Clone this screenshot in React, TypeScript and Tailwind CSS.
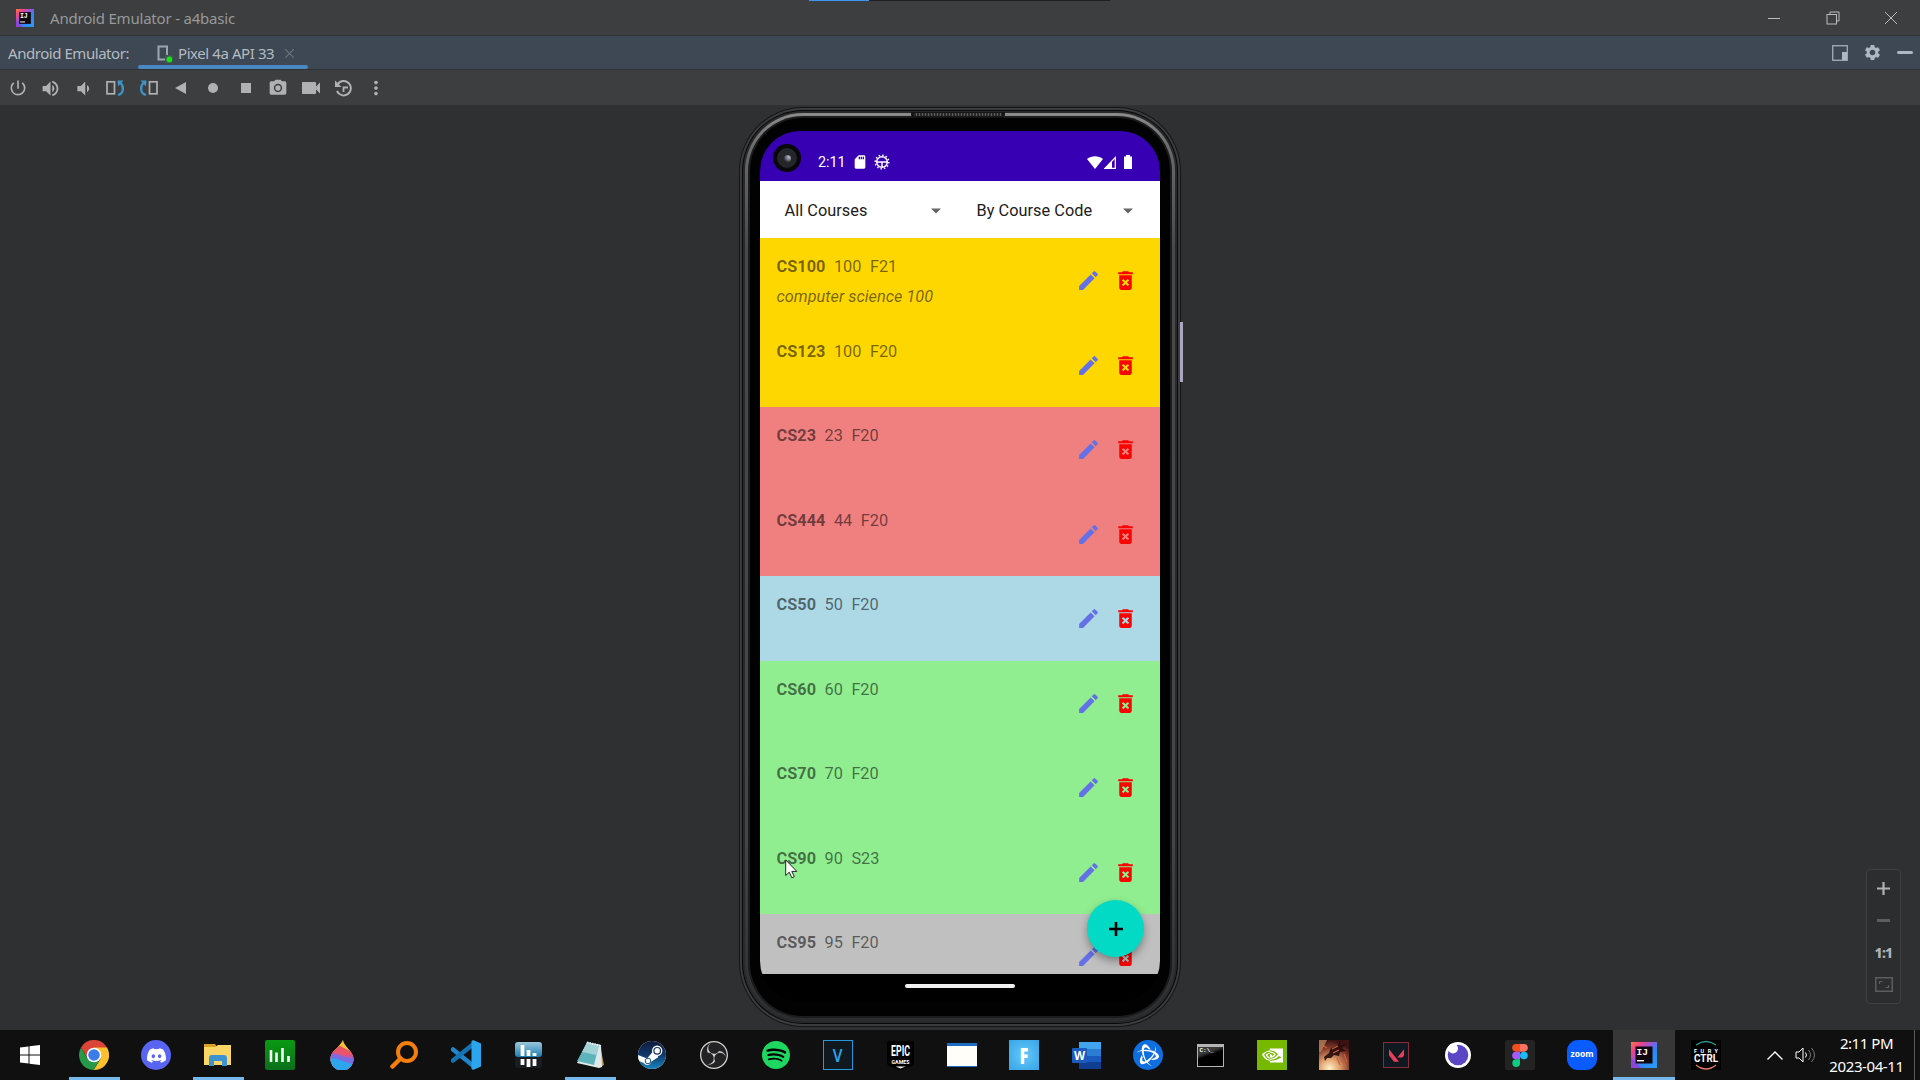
import type { ReactNode } from "react";
import {
  MdPowerSettingsNew, MdVolumeUp, MdVolumeDown, MdCameraAlt, MdVideocam, MdMoreVert,
  MdEdit, MdDeleteForever, MdSdCard, MdSettings,
} from "react-icons/md";
import { SiDiscord, SiSpotify, SiObsstudio, SiSteam, SiNvidia, SiValorant, SiBattledotnet } from "react-icons/si";

function IdeaLogo({ size, id }: { size: number; id: string }) {
  return (
    <svg width={size} height={size} viewBox="0 0 26 26">
      <defs>
        <linearGradient id={id} x1="0" y1="0" x2="1" y2="1">
          <stop offset="0" stopColor="#f97a3c" />
          <stop offset="0.22" stopColor="#f0408c" />
          <stop offset="0.45" stopColor="#8a5be0" />
          <stop offset="0.6" stopColor="#2f86f5" />
          <stop offset="1" stopColor="#2a9df5" />
        </linearGradient>
      </defs>
      <rect width="26" height="26" fill={`url(#${id})`} />
      <path d="M0 16v10h10z" fill="#8b46d8" />
      <rect x="4.5" y="4.5" width="17" height="17" fill="#12060f" />
      <text x="5.6" y="13.4" fill="#fff" fontSize="9.5" fontWeight="700" fontFamily="Liberation Mono, monospace">IJ</text>
      <rect x="6" y="18" width="7" height="1.4" fill="#fff" />
    </svg>
  );
}

function TitleBar() {
  return (
    <header className="relative flex h-[36px] items-center border-b border-[#313437] bg-[#3c3e40] pl-4">
      <IdeaLogo size={18} id="ideaTitle" />
      <span className="ml-4 pt-[2px] text-[15px] tracking-[-0.2px] whitespace-nowrap text-[#97999b]">Android Emulator - a4basic</span>
      <div className="ml-auto flex pt-px text-[#b9bbbc]">
        <div className="flex w-[60px] justify-center">
          <svg width="14" height="14" viewBox="0 0 14 14"><path d="M1 7.5h12" stroke="currentColor" /></svg>
        </div>
        <div className="flex w-[57px] justify-center">
          <svg width="14" height="14" viewBox="0 0 14 14" fill="none" stroke="currentColor">
            <rect x="1" y="3.5" width="9.5" height="9.5" /><path d="M4 3.5V1h9v9h-2.5" />
          </svg>
        </div>
        <div className="flex w-[59px] justify-center">
          <svg width="14" height="14" viewBox="0 0 14 14"><path d="M1 1l12 12M13 1L1 13" stroke="currentColor" /></svg>
        </div>
      </div>
      <div className="absolute top-0 left-[809px] flex h-px w-[301px] bg-[#1f2021]">
        <div className="h-px w-[60px] bg-[#3d97f2]" />
      </div>
    </header>
  );
}

function TabBar() {
  return (
    <div className="flex h-[34px] border-b border-[#2f3337] bg-[#3d4854] text-[15px] text-[#b4bac0]">
      <div className="flex w-[138px] items-center pt-[2px] pl-2 tracking-[-0.45px] whitespace-nowrap">Android Emulator:</div>
      <div className="relative flex w-[170px] items-center pt-[2px] pl-[19px]">
        <svg width="16" height="18" viewBox="0 0 16 18" fill="none">
          <path d="M10 10V1.5H1.5v13H8" stroke="#9aa5af" strokeWidth="2" />
          <rect x="8" y="10" width="8" height="8" fill="#41584e" />
          <circle cx="12.4" cy="14.4" r="2.8" fill="#14e814" />
        </svg>
        <span className="ml-[5px] w-[97px] tracking-[-0.42px] whitespace-nowrap">Pixel 4a API 33</span>
        <svg className="ml-[10px]" width="9" height="9" viewBox="0 0 9 9"><path d="M0 0l9 9M9 0L0 9" stroke="#6c757d" strokeWidth="1.1" /></svg>
        <div className="absolute bottom-0 left-0 h-[4px] w-full rounded-full bg-[#4a88c2]" />
      </div>
      <div className="ml-auto flex items-center text-[#afb7c2]">
        <svg width="16" height="16" viewBox="0 0 16 16">
          <rect x="0.75" y="0.75" width="14.5" height="14.5" fill="none" stroke="currentColor" strokeWidth="1.2" />
          <rect x="10" y="7" width="5" height="8" fill="currentColor" />
        </svg>
        <MdSettings className="ml-[15px]" size={19} />
        <div className="mr-[7px] ml-[15px] h-[3px] w-4 rounded-sm bg-current" />
      </div>
    </div>
  );
}

function RotateIcon({ flip }: { flip?: boolean }) {
  return (
    <svg className={flip ? "-scale-x-100" : ""} width="19" height="18" viewBox="0 0 19 18" fill="none">
      <rect x="1" y="2.8" width="7.5" height="12" stroke="#afb1b3" strokeWidth="1.7" />
      <path d="M12 16c6-1.500 6-9 2.500-12" stroke="#3d94c6" strokeWidth="2.300" />
      <path d="M11.500 1.500h6l-5.500 6z" fill="#3d94c6" />
    </svg>
  );
}

function ToolBar() {
  const tools: ReactNode[] = [
    <MdPowerSettingsNew size={20} />,
    <MdVolumeUp size={21} />,
    <MdVolumeDown size={21} />,
    <RotateIcon />,
    <RotateIcon flip />,
    <svg width="11" height="12" viewBox="0 0 11 12"><path d="M11 0v12L0 6z" fill="currentColor" /></svg>,
    <svg width="10" height="10" viewBox="0 0 10 10"><circle cx="5" cy="5" r="5" fill="currentColor" /></svg>,
    <div className="size-[10px] bg-current" />,
    <MdCameraAlt size={20} />,
    <MdVideocam size={24} />,
    <svg width="19" height="18" viewBox="0 0 19 18" fill="none" stroke="currentColor">
      <path d="M3.500 5.500A7.200 7.200 0 1 1 3 12" strokeWidth="2" />
      <path d="M1 1.500v6.500h6.500z" fill="currentColor" stroke="none" />
      <path d="M14 8.500H9.500V13" strokeWidth="1.800" />
    </svg>,
    <MdMoreVert size={22} />,
  ];
  return (
    <div className="flex h-[36px] items-center border-b border-[#323232] bg-[#3c3e40] pt-px pl-[2px] text-[#afb1b3]">
      {tools.map((t, i) => (
        <div key={i} className="flex w-[32.5px] justify-center">{t}</div>
      ))}
    </div>
  );
}

type Course = { code: string; mark: string; term: string; note?: string; bg: string };

const courses: Course[] = [
  { code: "CS100", mark: "100", term: "F21", note: "computer science 100", bg: "bg-[#ffd700]" },
  { code: "CS123", mark: "100", term: "F20", bg: "bg-[#ffd700]" },
  { code: "CS23", mark: "23", term: "F20", bg: "bg-[#f08080]" },
  { code: "CS444", mark: "44", term: "F20", bg: "bg-[#f08080]" },
  { code: "CS50", mark: "50", term: "F20", bg: "bg-[#add8e6]" },
  { code: "CS60", mark: "60", term: "F20", bg: "bg-[#90ee90]" },
  { code: "CS70", mark: "70", term: "F20", bg: "bg-[#90ee90]" },
  { code: "CS90", mark: "90", term: "S23", bg: "bg-[#90ee90]" },
  { code: "CS95", mark: "95", term: "F20", bg: "bg-[#c0c0c0]" },
];

function CourseRow({ c }: { c: Course }) {
  return (
    <div className={`flex h-[84.5px] shrink-0 pl-[16.500px] text-[16.300px] text-black/55 ${c.bg}`}>
      <div className="flex-1 pt-[19px]">
        <div className="flex gap-[8.500px] leading-[20px]">
          <span className="font-bold tracking-[0.050px]">{c.code}</span>
          <span>{c.mark}</span>
          <span>{c.term}</span>
        </div>
        {c.note && <div className="mt-[10px] leading-[20px] tracking-[0.020px] italic">{c.note}</div>}
      </div>
      <div className="flex gap-[12px] pt-[30px] pr-[22px]">
        <MdEdit size={25} className="text-[#6370e6]" />
        <MdDeleteForever size={25} className="text-[#f70500]" />
      </div>
    </div>
  );
}

function Spinner({ label, pad }: { label: string; pad: string }) {
  return (
    <div className={`flex items-center pt-[2px] text-[16.3px] text-[#202020] ${pad}`}>
      <span className="pt-[2px] tracking-[0.05px] whitespace-nowrap">{label}</span>
      <svg className="ml-auto" width="10" height="6" viewBox="0 0 10 6"><path d="M0 .500h10L5 5.500z" fill="#666" /></svg>
    </div>
  );
}

function Screen() {
  return (
    <div className="relative h-[870px] w-[400px] shrink-0 overflow-hidden rounded-[40px] bg-black font-[Roboto,sans-serif]">
      <div className="flex h-[50px] items-center bg-[#3700b3] pt-[12px] pr-[25px] pl-[13px] text-white">
        <div className="-mt-[8px] flex size-[28px] items-center justify-center rounded-full bg-[#08080b]">
          <div className="flex size-[20px] items-center justify-center rounded-full bg-[#25262a]">
            <div className="size-[7px] rounded-full bg-[radial-gradient(circle_at_70%_30%,#b8bcc8_0,#6c707c_45%,#25262a_80%)]" />
          </div>
        </div>
        <span className="ml-[17px] w-[27px] pt-px text-[14.3px] whitespace-nowrap">2:11</span>
        <MdSdCard className="ml-[7px]" size={16} />
        <svg className="ml-[6px]" width="16" height="16" viewBox="0 0 16 16" fill="none" stroke="#fff">
          <circle cx="8" cy="8" r="5.300" strokeWidth="1.500" />
          <circle cx="8" cy="8" r="6.800" strokeWidth="1.500" strokeDasharray="1.500 2.060" />
          <path d="M3 8h10M8 8V13" strokeWidth="1.500" />
        </svg>
        <svg className="ml-auto" width="16" height="13" viewBox="0 0 16 13"><path d="M0 3C4.500-.800 11.500-.800 16 3L8 13z" fill="#fff" /></svg>
        <svg className="ml-[1px]" width="12" height="13" viewBox="0 0 12 13">
          <path d="M11.300 1.500v10.900H1z" fill="none" stroke="#fff" strokeWidth="1.200" /><path d="M8 4.500V13H0z" fill="#fff" />
        </svg>
        <svg className="mr-[3px] ml-[8px]" width="8" height="14" viewBox="0 0 8 14"><path d="M0 1.500h2V0h4v1.500h2V14H0z" fill="#fff" /></svg>
      </div>
      <div className="grid h-[57px] grid-cols-[192.500px_207.500px] bg-white">
        <Spinner label="All Courses" pad="pl-[24.500px] pr-[12px]" />
        <Spinner label="By Course Code" pad="pl-[24px] pr-[27.500px]" />
      </div>
      <div className="flex h-[736px] flex-col overflow-hidden">
        {courses.map((c) => <CourseRow key={c.code} c={c} />)}
      </div>
      <div className="mx-auto mt-[10px] h-[4px] w-[110px] rounded-full bg-[#f0f0f0]" />
      <div className="absolute top-[769px] left-[327px] flex size-[57px] items-center justify-center rounded-full bg-[#03dac5] shadow-[0_4px_8px_rgba(0,0,0,0.35)]">
        <svg width="14" height="14" viewBox="0 0 14 14"><path d="M7 0v14M0 7h14" stroke="#000" strokeWidth="2.600" /></svg>
      </div>
    </div>
  );
}

function Phone() {
  return (
    <div className="relative h-[920px] w-[442px] rounded-[64px] bg-[#161617] p-[1px]">
      <div className="h-full rounded-[63px] bg-[#3b3c3d] p-[2px]">
        <div className="h-full rounded-[61px] bg-[#08080a] p-[1px]">
          <div className="h-full rounded-[60px] bg-[#29292a] p-[2px]">
            <div className="h-full rounded-[58px] bg-[linear-gradient(#8b8b8b,#6a6a6b_4%,#48494a_15%,#434445_80%,#2c2d2e)] p-[3px]">
              <div className="h-full rounded-[55px] bg-[#1b1c1c] p-[2px]">
                <div className="flex h-full justify-center rounded-[53px] bg-[#020203] pt-[13px]">
                  <Screen />
                </div>
              </div>
            </div>
          </div>
        </div>
      </div>
      <div className="absolute top-[5px] left-[172px] h-[6px] w-[94px] rounded-b-[4px] bg-[#151515] px-[3px] pt-px">
        <div className="h-[3px] bg-[repeating-linear-gradient(90deg,#2a2a2a_0_2px,#5c5c5c_2px_3px)]" />
      </div>
      <div className="absolute top-[215px] -right-[2px] h-[60px] w-[3px] bg-[#aaa5c0]" />
      <svg className="absolute top-[752px] left-[46px]" width="13" height="20" viewBox="0 0 13 20">
        <path d="M.700.900v15.600l3.600-3.300 2.600 5.600 2.400-1.100-2.500-5.300h5z" fill="#fff" stroke="#222" strokeWidth="1" />
      </svg>
    </div>
  );
}

function ZoomPanel() {
  return (
    <div className="flex h-[135px] w-[35px] flex-col items-center rounded-[4px] border border-[#3f4042] bg-[#2c2d2e] pt-[12px]">
      <svg width="13" height="13" viewBox="0 0 13 13"><path d="M6.500 0v13M0 6.500h13" stroke="#afb1b3" strokeWidth="2.200" /></svg>
      <div className="mt-[24px] h-[2.500px] w-[13px] bg-[#5c5d5e]" />
      <span className="mt-[20px] text-[14px] leading-[22px] font-extrabold tracking-[-0.8px] text-[#afb1b3]">1:1</span>
      <svg className="mt-[13px]" width="18" height="15" viewBox="0 0 18 15" fill="none" stroke="#5c5d5e">
        <rect x="0.75" y="0.75" width="16.5" height="13.5" strokeWidth="1.500" /><path d="M4.500 7V4.500H7.500M13.500 8v2.500h-3" strokeWidth="1.200" />
      </svg>
    </div>
  );
}

const chrome = (
  <svg width="30" height="30" viewBox="0 0 30 30">
    <path d="M15 15L2 7.500A15 15 0 0 1 28 7.500z" fill="#db4437" />
    <path d="M15 7.500H28A15 15 0 0 1 14.700 30L21.500 18.700z" fill="#fbc02d" />
    <path d="M2 7.500l6.500 11L15 7.500z" fill="#db4437" />
    <path d="M2 7.500A15 15 0 0 0 14.700 30L21.400 18.700H8.500z" fill="#279847" />
    <circle cx="15" cy="15" r="7.300" fill="#fff" /><circle cx="15" cy="15" r="5.800" fill="#3b7de8" />
  </svg>
);

const discord = (
  <div className="flex size-[30px] items-center justify-center rounded-full bg-[#5865f2] text-white"><SiDiscord size={19} /></div>
);

const folder = (
  <svg width="28" height="24" viewBox="0 0 28 24">
    <path d="M0 1h11l2 3h-13z" fill="#d9a022" /><path d="M0 4h11l3-2h13v20H0z" fill="#fbd566" />
    <path d="M5 23V15q0-3 3-3h12q3 0 3 3v8h-5v-5h-8v5z" fill="#3c93cf" />
  </svg>
);

const bars = (
  <svg width="30" height="30" viewBox="0 0 30 30">
    <defs><linearGradient id="gBars" x2="0" y2="1"><stop stopColor="#0a9a12" /><stop offset="1" stopColor="#0b6f1c" /></linearGradient></defs>
    <rect width="30" height="30" rx="2" fill="url(#gBars)" />
    <path d="M6 10v12M11.500 12.500V22M17.500 8v14M23.500 16v6" stroke="#f4fff4" strokeWidth="2.600" />
  </svg>
);

const paint = (
  <svg width="24" height="30" viewBox="0 0 24 30">
    <defs><clipPath id="drop"><path d="M13 0c1 7 10.500 11 10.500 19A11.500 11.500 0 0 1 .500 19C.500 11 9 8 13 0z" /></clipPath></defs>
    <g clipPath="url(#drop)">
      <rect width="24" height="30" fill="#f5c236" />
      <path d="M0 10l10-4 14 7v17H0z" fill="#ea5566" />
      <path d="M0 12c8-2 12 6 24 2v16H0z" fill="#d0559c" />
      <path d="M0 15c8-3 14 5 24 2v13H0z" fill="#7a6ce0" />
      <path d="M0 18c8 0 12 4 24 6v6H0z" fill="#2ba5ee" />
    </g>
  </svg>
);

const search = (
  <svg width="28" height="28" viewBox="0 0 28 28" fill="none" stroke="#f57f0c" strokeLinecap="round">
    <circle cx="17" cy="11" r="9" strokeWidth="4" /><path d="M10.500 17.500L2.500 25.500" strokeWidth="4.500" />
  </svg>
);

const vscode = (
  <svg width="30" height="30" viewBox="0 0 30 30">
    <path d="M2 9.500L22.500 26" stroke="#1f86cc" strokeWidth="4.500" strokeLinecap="round" />
    <path d="M2 20.500L22.500 4" stroke="#1473b4" strokeWidth="4.500" strokeLinecap="round" />
    <path d="M22 0l8 3.500v23L22 30l-1.500-1.500V1.500z" fill="#2aa5ee" />
  </svg>
);

const monitor = (
  <svg width="27" height="26" viewBox="0 0 27 26">
    <defs><linearGradient id="gMon" x2="0" y2="1"><stop stopColor="#9bc8dc" /><stop offset="1" stopColor="#1b7db2" /></linearGradient></defs>
    <rect width="27" height="15" rx="3" fill="url(#gMon)" /><rect y="15" width="27" height="11" rx="3" fill="#1a1d1f" />
    <path d="M7.500 3v11M13.500 8v6M19.500 11v3M7.500 17v6M13.500 17v8M19.500 17v7" stroke="#fff" strokeWidth="3.800" />
  </svg>
);

const notepad = (
  <svg width="28" height="28" viewBox="0 0 28 28">
    <path d="M24 4l4 20-5 3z" fill="#b79a5c" /><path d="M11 1l14 3 1 22-3 1-22-5z" fill="#dfe9ea" />
    <path d="M11 2l12 2-5 20L1 20z" fill="#5fb3bd" /><path d="M11 2l12 2-2.500 10L6 11z" fill="#a2d2d6" />
    <path d="M11 1.500l13 3" stroke="#e8eeee" strokeWidth="2" strokeDasharray="1.500 1" />
  </svg>
);

const steam = (
  <div className="flex size-[28px] items-center justify-center overflow-hidden rounded-full bg-white text-[#143a6a]">
    <SiSteam className="hidden" />
    <svg width="28" height="28" viewBox="0 0 28 28">
      <defs><linearGradient id="gSteam" x2="0" y2="1"><stop stopColor="#101a3a" /><stop offset="0.5" stopColor="#11386b" /><stop offset="1" stopColor="#1787bf" /></linearGradient></defs>
      <rect width="28" height="28" fill="url(#gSteam)" />
      <path d="M0 14l9 3.600 6-7 5.500 5.500-7 4.500a4.300 4.300 0 0 1-7.800 1.400L0 19.500z" fill="#fff" />
      <circle cx="19.200" cy="9.800" r="5.200" fill="#fff" /><circle cx="19.200" cy="9.800" r="3.300" fill="none" stroke="#14305c" strokeWidth="1.200" />
      <circle cx="10" cy="20" r="2.800" fill="none" stroke="#14507f" strokeWidth="1" />
    </svg>
  </div>
);

const obs = (
  <div className="flex size-[28px] items-center justify-center rounded-full bg-[#222124] text-[#d0d0d0]"><SiObsstudio size={28} /></div>
);

const spotify = (
  <div className="flex size-[28px] items-center justify-center rounded-full bg-black text-[#1ed760]"><SiSpotify size={28} /></div>
);

const vegas = (
  <div className="flex size-[30px] items-center justify-center border border-[#2597dc] bg-[#101820] text-[18px] leading-none font-semibold text-[#28a4ea]">
    <span className="scale-x-[0.85]">V</span>
  </div>
);

const epic = (
  <svg width="27" height="29" viewBox="0 0 27 29">
    <path d="M2 0h23q2 0 2 2v20q0 2-2 3l-11.500 4L2 25q-2-1-2-3V2q0-2 2-2z" fill="#000" />
    <text x="4" y="15" fill="#fff" fontSize="15" fontWeight="700" fontFamily="Roboto, sans-serif" textLength="19" lengthAdjust="spacingAndGlyphs">EPIC</text>
    <path d="M8.500 25.500h10l-5 2z" fill="#fff" />
    <text x="4.500" y="22.500" fill="#fff" fontSize="5.500" fontWeight="700" fontFamily="Roboto, sans-serif" textLength="18" lengthAdjust="spacingAndGlyphs">GAMES</text>
  </svg>
);

const whiteWindow = <div className="h-[24px] w-[30px] border-t-[3px] border-b border-[#1c6cc4] bg-[#fffef8]" />;

const fortnite = (
  <div className="flex size-[30px] items-center justify-center bg-[radial-gradient(#66c8fa,#35a4e6)] text-[22px] leading-none font-black text-white">
    <span className="scale-x-[0.75]">F</span>
  </div>
);

const word = (
  <svg width="29" height="27" viewBox="0 0 29 27">
    <path fill="#41a5ee" d="M7 0h22v7H7z" /><path fill="#2b7cd3" d="M7 7h22v7H7z" /><path fill="#185abd" d="M7 14h22v6H7z" /><path fill="#103f91" d="M7 20h22v7H7z" />
    <rect y="6" width="15" height="15" rx="1" fill="#1b5abe" />
    <text x="7.500" y="17.800" textAnchor="middle" fill="#fff" fontSize="11.500" fontWeight="700" fontFamily="Open Sans, sans-serif">W</text>
  </svg>
);

const battle = (
  <div className="flex size-[30px] items-center justify-center rounded-full bg-[#0f6fe0] text-white"><SiBattledotnet size={22} /></div>
);

const terminal = (
  <div className="h-[23px] w-[27px] border border-t-[3px] border-[#b4b4b4] bg-[linear-gradient(160deg,#3a3a3a_30%,#000_45%)] pl-[2px] font-[Liberation_Mono,monospace] text-[6px] leading-[8px] font-bold text-white">C:\_</div>
);

const nvidia = (
  <div className="flex size-[30px] items-center justify-center bg-[#76b900] text-white"><SiNvidia size={21} /></div>
);

const ember = (
  <svg width="30" height="30" viewBox="0 0 30 30">
    <defs>
      <radialGradient id="gEmber" cx="0.35" cy="0.95" r="0.95"><stop stopColor="#fff3c8" /><stop offset="0.35" stopColor="#e0a06c" /><stop offset="0.7" stopColor="#8a3f2c" /><stop offset="1" stopColor="#3a1212" /></radialGradient>
    </defs>
    <rect width="30" height="30" fill="url(#gEmber)" />
    <path d="M5 17l5-4 2-5 6-2 3-5 1 4 6-1-5 4 4 3-6 1-1 4-5-1-3 3-4 0-2 3z" fill="#260b0d" opacity="0.9" />
    <path d="M13 9l6-3M14 13l6-3M3 5l5 3M22 20l5 6M25 14l3 8M18 18l3 7" stroke="#c9623c" strokeWidth="1.200" />
    <path d="M0 0h8L2 12H0z" fill="#b8805c" opacity="0.8" />
  </svg>
);

const valorant = (
  <div className="flex size-[26px] items-center justify-center border border-[#8a2b3c] bg-[#101822] text-[#e8405a]"><SiValorant size={15} /></div>
);

const eclipse = (
  <svg width="26" height="26" viewBox="0 0 26 26">
    <circle cx="13" cy="13" r="13" fill="#fff" /><circle cx="13" cy="13" r="10.300" fill="#5a46c4" /><circle cx="8" cy="6.500" r="5" fill="#fff" />
  </svg>
);

const figma = (
  <div className="flex size-[30px] items-center justify-center rounded-[2px] bg-[#232323]">
    <svg width="16" height="23" viewBox="0 0 16 23">
      <path d="M8 0H4a3.830 3.830 0 0 0 0 7.660h4z" fill="#f24e1e" /><path d="M8 0h4a3.830 3.830 0 0 1 0 7.660H8z" fill="#ff7262" />
      <path d="M8 7.660H4a3.830 3.830 0 0 0 0 7.660h4z" fill="#a259ff" /><circle cx="11.900" cy="11.500" r="3.830" fill="#1abcfe" />
      <path d="M8 15.320H4A3.830 3.830 0 1 0 8 19.100z" fill="#0acf83" />
    </svg>
  </div>
);

const zoomApp = (
  <div className="flex size-[30px] items-center justify-center rounded-[11px] bg-[#0b5cff] text-[8.500px] leading-none font-bold text-white"><span className="mb-px">zoom</span></div>
);

const fury = (
  <svg width="30" height="30" viewBox="0 0 30 30" fill="none">
    <rect width="30" height="30" fill="#000" />
    <path d="M5 5Q15-2 25 5" stroke="#2b9a8c" strokeWidth="1.400" /><path d="M5 25Q15 33 25 25" stroke="#e87868" strokeWidth="1.400" />
    <text x="3" y="12.500" fill="#fff" fontSize="5.500" fontWeight="700" fontFamily="Roboto, sans-serif" textLength="24">FURY</text>
    <text x="3" y="21.500" fill="#fff" fontSize="10" fontWeight="700" fontFamily="Roboto, sans-serif" textLength="24" lengthAdjust="spacingAndGlyphs">CTRL</text>
  </svg>
);

type TaskApp = { name: string; icon: ReactNode; state?: "open" | "active" };

const apps: TaskApp[] = [
  { name: "chrome", icon: chrome, state: "open" }, { name: "discord", icon: discord }, { name: "folder", icon: folder, state: "open" },
  { name: "bars", icon: bars }, { name: "paint", icon: paint }, { name: "search", icon: search }, { name: "vscode", icon: vscode },
  { name: "monitor", icon: monitor }, { name: "notepad", icon: notepad, state: "open" }, { name: "steam", icon: steam }, { name: "obs", icon: obs },
  { name: "spotify", icon: spotify }, { name: "vegas", icon: vegas }, { name: "epic", icon: epic }, { name: "window", icon: whiteWindow },
  { name: "fortnite", icon: fortnite }, { name: "word", icon: word }, { name: "battle", icon: battle }, { name: "terminal", icon: terminal },
  { name: "nvidia", icon: nvidia }, { name: "ember", icon: ember }, { name: "valorant", icon: valorant }, { name: "eclipse", icon: eclipse },
  { name: "figma", icon: figma }, { name: "zoom", icon: zoomApp }, { name: "idea", icon: <IdeaLogo size={26} id="ideaTask" />, state: "active" },
  { name: "fury", icon: fury },
];

function Taskbar() {
  return (
    <footer className="flex h-[50px] bg-[#101010] text-white">
      <div className="flex w-[63px] items-center pl-5">
        <svg width="20" height="20" viewBox="0 0 20 20" fill="#fff"><path d="M0 2.500L8.500 1.400V9.500H0zM9.500 1.200L20 0v9.500H9.500zM0 10.500h8.500v8.100L0 17.500zM9.500 10.500H20V20L9.500 18.800z" /></svg>
      </div>
      {apps.map((a) => (
        <div key={a.name} className={`relative flex w-[62px] shrink-0 items-center justify-center ${a.state === "active" ? "bg-[#373737]" : ""}`}>
          {a.icon}
          {a.state === "open" && <div className="absolute bottom-0 left-[6px] h-[3px] w-[51px] bg-[#76b9ed]" />}
          {a.state === "active" && <div className="absolute bottom-0 left-0 h-[3px] w-full bg-[#76b9ed]" />}
        </div>
      ))}
      <div className="ml-auto flex items-center">
        <svg width="16" height="9" viewBox="0 0 16 9"><path d="M.500 8.500L8 1l7.500 7.500" fill="none" stroke="#fff" strokeWidth="1.400" /></svg>
        <svg className="ml-[12px]" width="21" height="18" viewBox="0 0 21 18" fill="none" stroke="#fff">
          <path d="M1 6h3l4-4v14l-4-4H1z" /><path d="M10.500 6.500q2 2.500 0 5" /><path d="M13.500 4q4 5 0 10M16.500 2q6 7 0 14" stroke="#777" />
        </svg>
        <div className="ml-[12px] flex w-[77px] flex-col items-center text-[15px] leading-[23px] whitespace-nowrap">
          <span className="tracking-[-0.450px]">2:11 PM</span>
          <span className="tracking-[-0.400px]">2023-04-11</span>
        </div>
        <div className="ml-[9px] h-[50px] w-px bg-[#5a5a5a]" />
        <div className="w-[5px]" />
      </div>
    </footer>
  );
}

export default function App() {
  return (
    <div className="flex h-[1080px] w-[1920px] flex-col overflow-hidden bg-[#2f3032] font-[Noto_Sans,Open_Sans,sans-serif]">
      <TitleBar />
      <TabBar />
      <ToolBar />
      <main className="grid flex-1 grid-cols-[1fr_442px_1fr] bg-[#2f3032]">
        <div />
        <div className="pt-px"><Phone /></div>
        <div className="flex items-end justify-end pr-[19px] pb-[26px]"><ZoomPanel /></div>
      </main>
      <Taskbar />
    </div>
  );
}
